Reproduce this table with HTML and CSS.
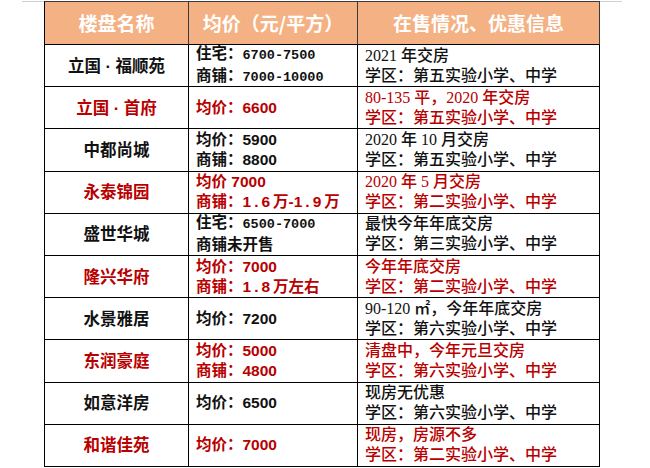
FILE: index.html
```html
<!DOCTYPE html>
<html lang="zh">
<head>
<meta charset="utf-8">
<link rel="stylesheet" href="styles.css">
</head>
<body>
<div class="page">
  <div class="edge"></div>
  <div class="houses">
    <div class="row head">
      <div class="cell">楼盘名称</div>
      <div class="cell">均价（元/平方）</div>
      <div class="cell">在售情况、优惠信息</div>
    </div>
    <div class="row">
      <div class="cell name">立国 · 福顺苑</div>
      <div class="cell price"><p>住宅：<span class="mono">6700-7500</span></p><p>商铺：<span class="mono">7000-10000</span></p></div>
      <div class="cell info"><p>2021 年交房</p><p>学区：第五实验小学、中学</p></div>
    </div>
    <div class="row red">
      <div class="cell name">立国 · 首府</div>
      <div class="cell price"><p>均价：6600</p></div>
      <div class="cell info"><p>80-135 平，2020 年交房</p><p>学区：第五实验小学、中学</p></div>
    </div>
    <div class="row">
      <div class="cell name">中都尚城</div>
      <div class="cell price"><p>均价：5900</p><p>商铺：8800</p></div>
      <div class="cell info"><p>2020 年 10 月交房</p><p>学区：第五实验小学、中学</p></div>
    </div>
    <div class="row red">
      <div class="cell name">永泰锦园</div>
      <div class="cell price"><p>均价 7000</p><p>商铺：<span class="wide">1.6</span>万-<span class="wide">1.9</span>万</p></div>
      <div class="cell info"><p>2020 年 5 月交房</p><p>学区：第二实验小学、中学</p></div>
    </div>
    <div class="row">
      <div class="cell name">盛世华城</div>
      <div class="cell price"><p>住宅：<span class="mono">6500-7000</span></p><p>商铺未开售</p></div>
      <div class="cell info"><p>最快今年年底交房</p><p>学区：第三实验小学、中学</p></div>
    </div>
    <div class="row red">
      <div class="cell name">隆兴华府</div>
      <div class="cell price"><p>均价：7000</p><p>商铺：<span class="wide">1.8</span>万左右</p></div>
      <div class="cell info"><p>今年年底交房</p><p>学区：第二实验小学、中学</p></div>
    </div>
    <div class="row">
      <div class="cell name">水景雅居</div>
      <div class="cell price"><p>均价：7200</p></div>
      <div class="cell info"><p>90-120 ㎡，今年年底交房</p><p>学区：第六实验小学、中学</p></div>
    </div>
    <div class="row red">
      <div class="cell name">东润豪庭</div>
      <div class="cell price"><p>均价：5000</p><p>商铺：4800</p></div>
      <div class="cell info"><p>清盘中，今年元旦交房</p><p>学区：第六实验小学、中学</p></div>
    </div>
    <div class="row">
      <div class="cell name">如意洋房</div>
      <div class="cell price"><p>均价：6500</p></div>
      <div class="cell info"><p>现房无优惠</p><p>学区：第六实验小学、中学</p></div>
    </div>
    <div class="row red">
      <div class="cell name">和谐佳苑</div>
      <div class="cell price"><p>均价：7000</p></div>
      <div class="cell info"><p>现房，房源不多</p><p>学区：第二实验小学、中学</p></div>
    </div>
  </div>
  <div class="edge"></div>
</div>
</body>
</html>
```

FILE: styles.css
```css
html, body {
  margin: 0;
  padding: 0;
  background: #ffffff;
}

.page {
  display: flex;
  align-items: flex-start;
  padding: 1px 0 0 22px;
}

.edge {
  width: 22px;
  height: 1px;
  background: #d0d0d0;
}

.houses {
  display: grid;
  grid-template-columns: 144px 169px 242px;
  grid-template-rows: 43px;
  grid-auto-rows: 42.2px;
  border-top: 1px solid #3a3a3a;
  border-left: 1px solid #000000;
  font-family: "Liberation Serif", "Noto Sans CJK SC", serif;
  font-size: 16px;
  color: #111111;
}

.row {
  display: contents;
}

.cell {
  display: flex;
  flex-direction: column;
  justify-content: center;
  align-items: flex-start;
  padding-left: 7px;
  border-right: 1px solid #000000;
  border-bottom: 1px solid #000000;
  line-height: 20px;
  white-space: nowrap;
  overflow: hidden;
}

.cell p {
  margin: 0;
}

.head .cell {
  align-items: center;
  padding-left: 0;
  background: #f4b183;
  color: #ffffff;
  font-family: "Noto Sans CJK SC", sans-serif;
  font-weight: 700;
  font-size: 19px;
  border-right-color: #3a3a3a;
}

.name {
  align-items: center;
  padding-left: 0;
  font-family: "Liberation Sans", "Noto Sans CJK SC", sans-serif;
  font-weight: 700;
  font-size: 16.5px;
}

.price {
  font-family: "Liberation Sans", "Noto Sans CJK SC", sans-serif;
  font-weight: 700;
  font-size: 15.5px;
}

.info {
  font-family: "Liberation Serif", "Noto Sans CJK SC", serif;
  font-weight: 500;
}

.mono {
  font-family: "Liberation Mono", "Noto Sans CJK SC", monospace;
  font-size: 13.5px;
  font-weight: 700;
}

.wide {
  letter-spacing: 3px;
}

.red .cell {
  color: #b80000;
}
```
